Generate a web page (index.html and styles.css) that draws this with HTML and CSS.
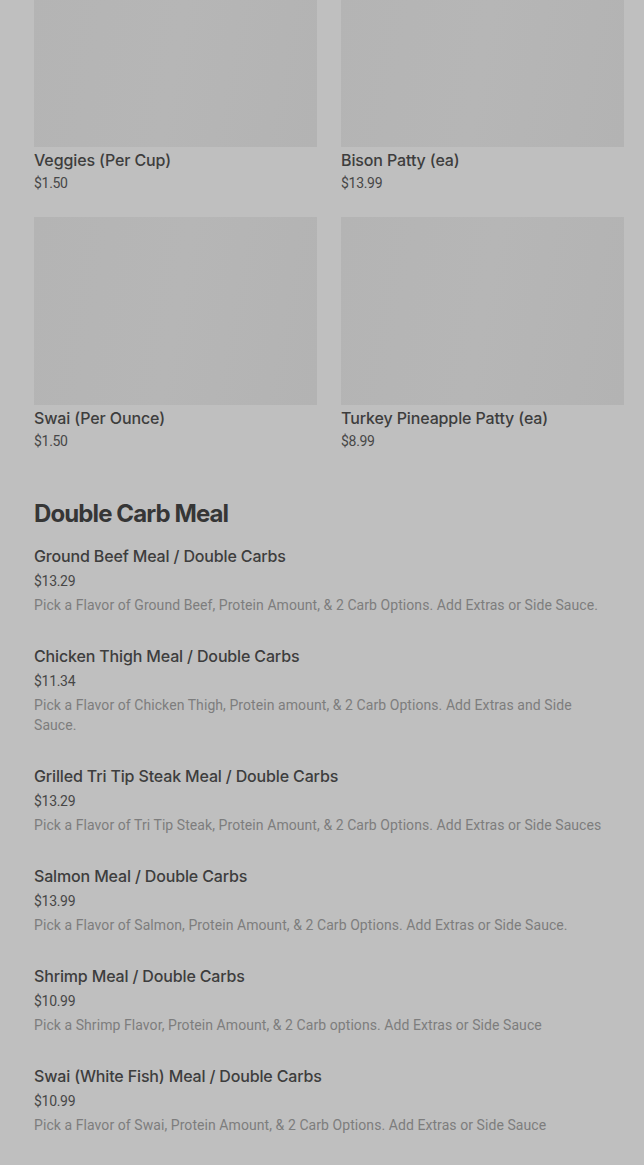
FILE: index.html
```html
<!DOCTYPE html>
<html>
<head>
<meta charset="utf-8">
<link rel="stylesheet" href="styles.css">
</head>
<body>
<div class="page">
  <div class="grid">
    <div class="card">
      <div class="thumb"></div>
      <div class="card-title">Veggies (Per Cup)</div>
      <div class="card-price">$1.50</div>
    </div>
    <div class="card">
      <div class="thumb"></div>
      <div class="card-title">Bison Patty (ea)</div>
      <div class="card-price">$13.99</div>
    </div>
    <div class="card">
      <div class="thumb"></div>
      <div class="card-title">Swai (Per Ounce)</div>
      <div class="card-price">$1.50</div>
    </div>
    <div class="card">
      <div class="thumb"></div>
      <div class="card-title">Turkey Pineapple Patty (ea)</div>
      <div class="card-price">$8.99</div>
    </div>
  </div>

  <section class="section">
    <h2 class="section-title">Double Carb Meal</h2>
    <div class="item">
      <div class="item-title">Ground Beef Meal / Double Carbs</div>
      <div class="item-price">$13.29</div>
      <div class="item-desc">Pick a Flavor of Ground Beef, Protein Amount, &amp; 2 Carb Options. Add Extras or Side Sauce.</div>
    </div>
    <div class="item">
      <div class="item-title">Chicken Thigh Meal / Double Carbs</div>
      <div class="item-price">$11.34</div>
      <div class="item-desc">Pick a Flavor of Chicken Thigh, Protein amount, &amp; 2 Carb Options. Add Extras and Side Sauce.</div>
    </div>
    <div class="item">
      <div class="item-title">Grilled Tri Tip Steak Meal / Double Carbs</div>
      <div class="item-price">$13.29</div>
      <div class="item-desc">Pick a Flavor of Tri Tip Steak, Protein Amount, &amp; 2 Carb Options. Add Extras or Side Sauces</div>
    </div>
    <div class="item">
      <div class="item-title">Salmon Meal / Double Carbs</div>
      <div class="item-price">$13.99</div>
      <div class="item-desc">Pick a Flavor of Salmon, Protein Amount, &amp; 2 Carb Options. Add Extras or Side Sauce.</div>
    </div>
    <div class="item">
      <div class="item-title">Shrimp Meal / Double Carbs</div>
      <div class="item-price">$10.99</div>
      <div class="item-desc">Pick a Shrimp Flavor, Protein Amount, &amp; 2 Carb options. Add Extras or Side Sauce</div>
    </div>
    <div class="item">
      <div class="item-title">Swai (White Fish) Meal / Double Carbs</div>
      <div class="item-price">$10.99</div>
      <div class="item-desc">Pick a Flavor of Swai, Protein Amount, &amp; 2 Carb Options. Add Extras or Side Sauce</div>
    </div>
  </section>
</div>
</body>
</html>
```
FILE: styles.css
```css
* { box-sizing: border-box; }
html, body {
  margin: 0;
  padding: 0;
  background: #bfbfbf;
  overflow: hidden;
}
body {
  font-family: Roboto, "Liberation Sans", sans-serif;
  color: #3a3a3a;
}
.page {
  margin-top: -41px;
  padding: 0 20px 0 34px;
}
.grid {
  display: grid;
  grid-template-columns: 283px 283px;
  column-gap: 24px;
  row-gap: 25px;
}
.card {
  display: flex;
  flex-direction: column;
}
.thumb {
  height: 188px;
  background: linear-gradient(100deg, #b4b4b4 0%, #b6b6b6 50%, #b3b3b3 100%);
}
.card-title {
  margin-top: 3px;
  font-family: Inter, Roboto, sans-serif;
  font-size: 16px;
  line-height: 20px;
  font-weight: 500;
  color: #3d3d3d;
  letter-spacing: -0.12px;
}
.card-price {
  margin-top: 4px;
  font-size: 14px;
  line-height: 18px;
  color: #474747;
  letter-spacing: -0.3px;
}
.section {
  margin-top: 48px;
}
.section-title {
  margin: 0 0 16px;
  font-family: Inter, Roboto, sans-serif;
  font-size: 24px;
  line-height: 32px;
  font-weight: 700;
  color: #363636;
  letter-spacing: -0.9px;
}
.item {
  padding-bottom: 31px;
}
.item-title {
  font-family: Inter, Roboto, sans-serif;
  font-size: 16px;
  line-height: 20px;
  font-weight: 500;
  color: #3d3d3d;
  letter-spacing: -0.15px;
}
.item-price {
  margin-top: 5px;
  font-size: 14px;
  line-height: 20px;
  color: #474747;
  letter-spacing: -0.3px;
}
.item-desc {
  margin-top: 4px;
  font-size: 14px;
  line-height: 20px;
  color: #7d7d7d;
  letter-spacing: 0.07px;
  padding-right: 14px;
}
```
